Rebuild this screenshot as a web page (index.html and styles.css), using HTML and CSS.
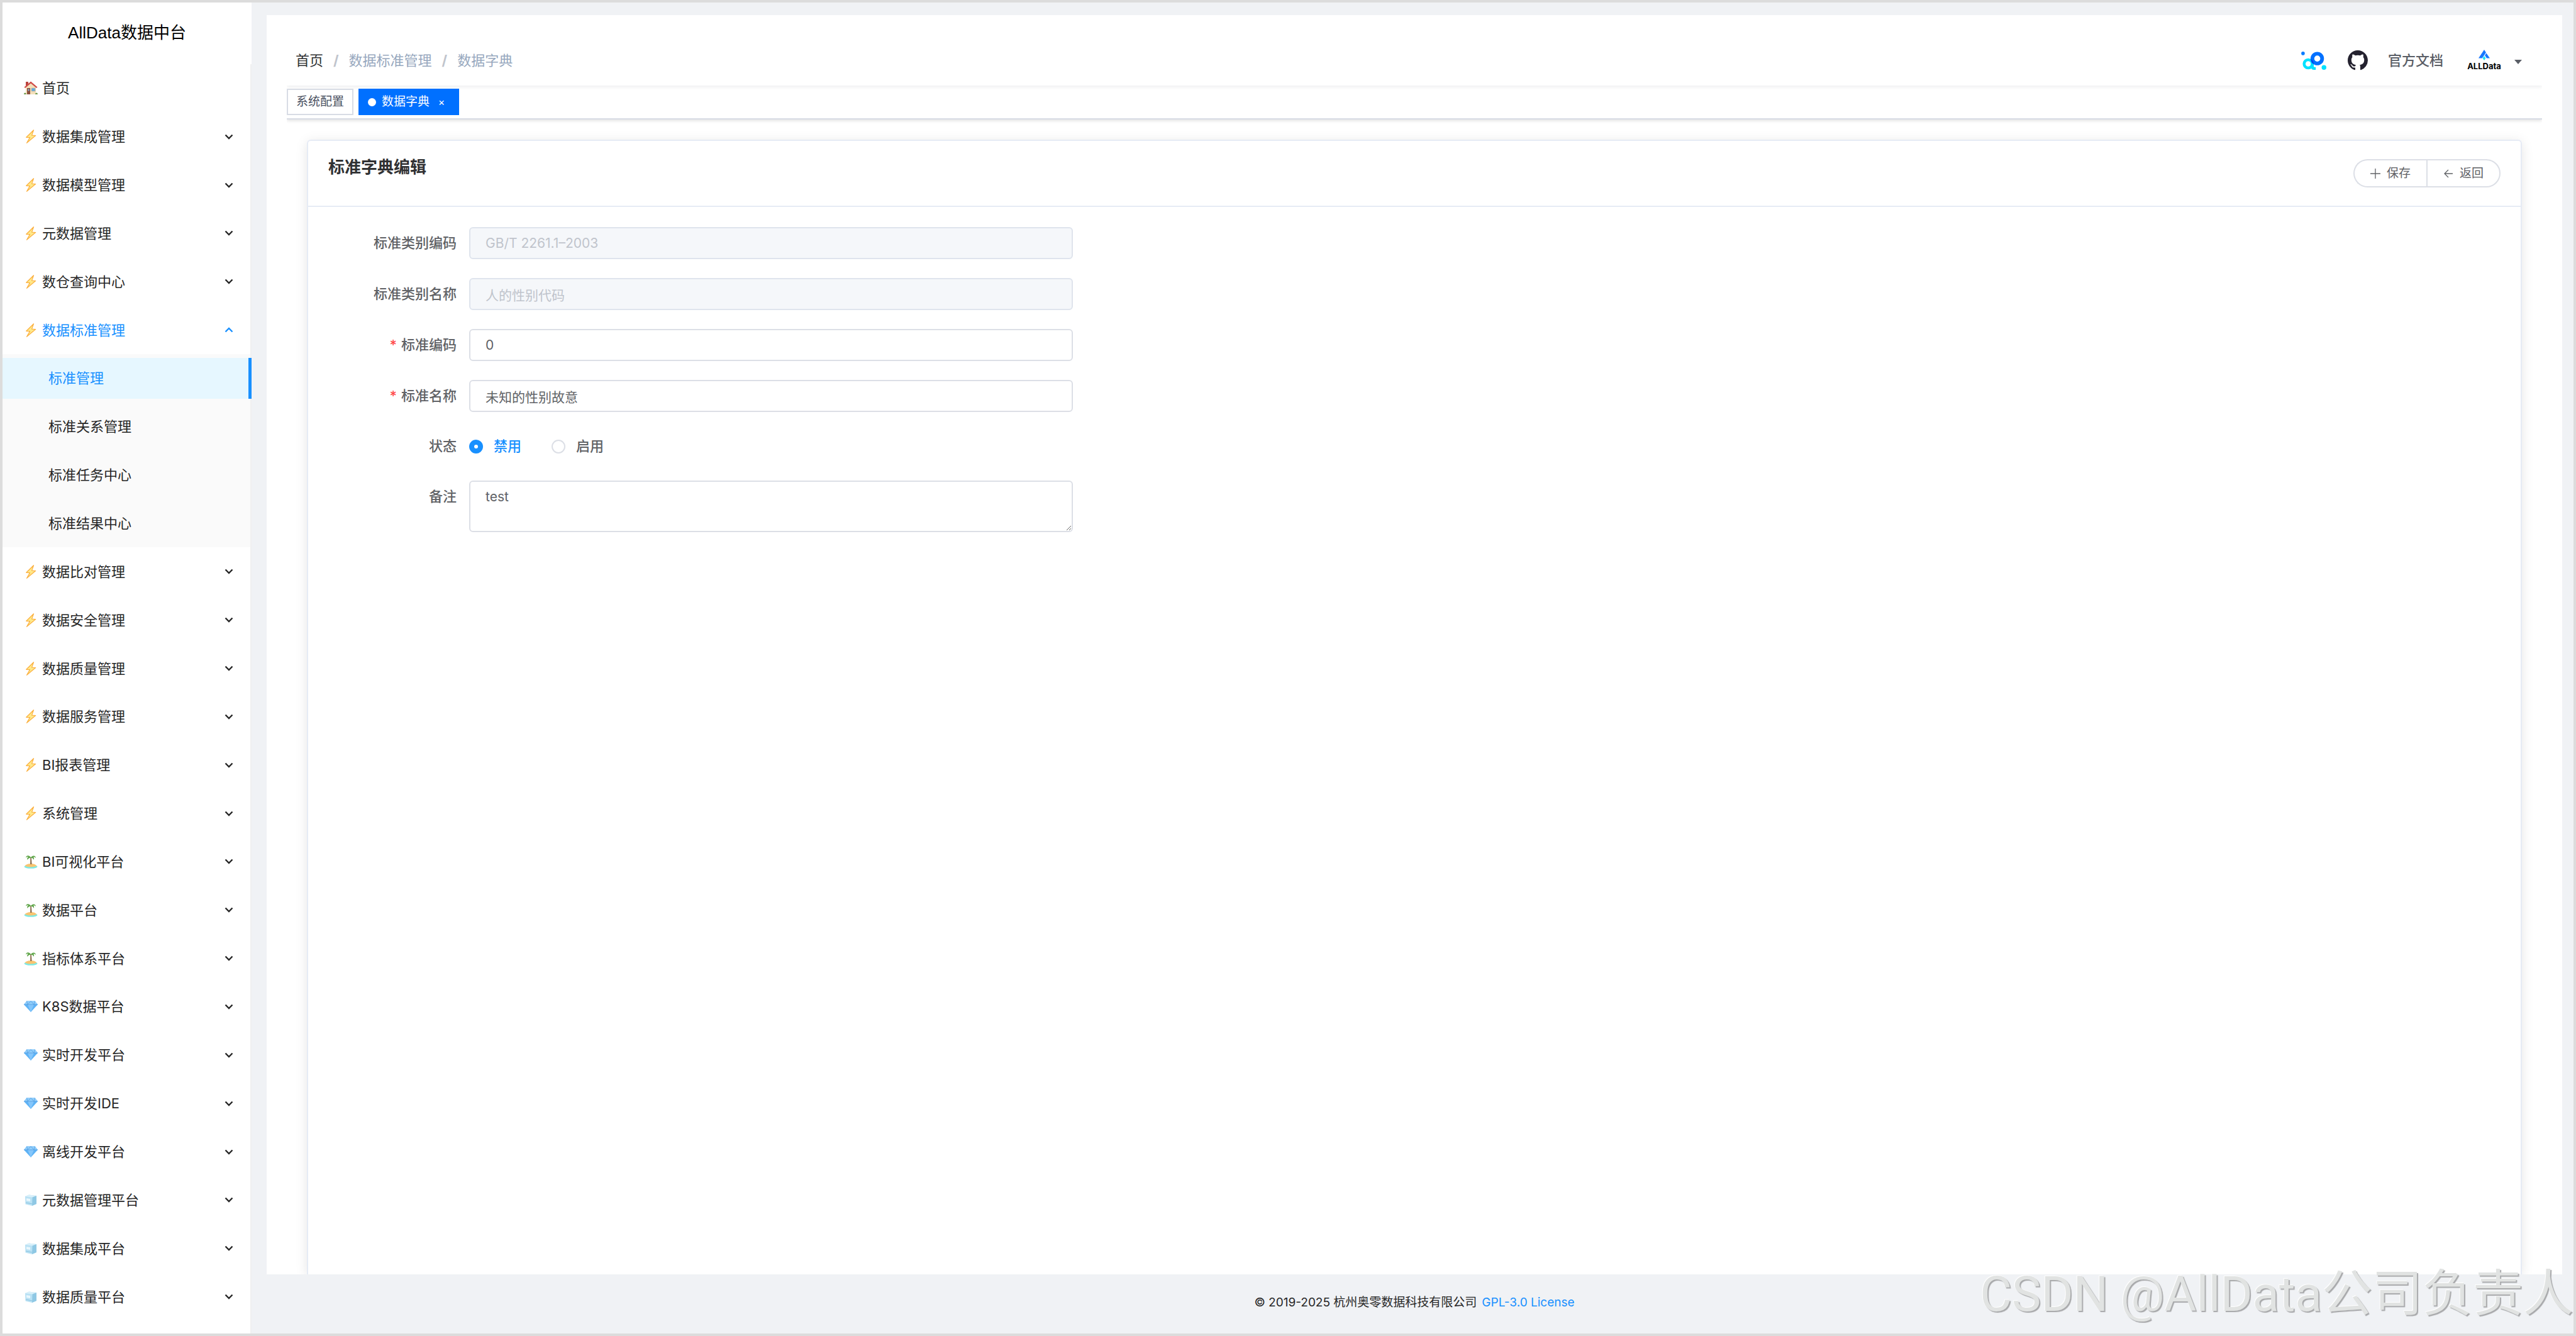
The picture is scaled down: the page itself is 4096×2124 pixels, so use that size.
FILE: index.html
```html
<!DOCTYPE html>
<html lang="zh-CN">
<head>
  <meta charset="UTF-8">
  <title>AllData数据中台</title>
  <link rel="stylesheet" href="styles.css">
</head>
<body>

<!-- shared icons -->
<svg class="sprite" width="0" height="0" aria-hidden="true">
  <symbol id="i-home" viewBox="0 0 22 22">
    <path d="M3 1h4v6H3z" fill="#b8453f"/>
    <path d="M11 2l8 7v12H3V9z" fill="#f3dfba"/>
    <path d="M11 .5L21.500 9.500 20 11 11 3.500 2 11 .5 9.500z" fill="#cf4a47"/>
    <path d="M5 11h5v10H5z" fill="#8b4f3c"/>
    <path d="M6.500 12.500h2v3h-2z" fill="#7db7e0"/>
    <path d="M12 11h6v5h-6z" fill="#5fa8e0" stroke="#c9b79a" stroke-width=".8"/>
    <path d="M0 21c0-3 3-3.500 4 0zM18 21c.5-3.500 4-3 4 0z" fill="#6f9a4c"/>
  </symbol>
  <symbol id="i-bolt" viewBox="0 0 22 22">
    <path d="M15.500.8L3.800 12.300l5.700.3L4.500 21.300 18.600 9.500l-6-.4z" fill="#ffe98a" stroke="#fbb040" stroke-width="1.200" stroke-linejoin="round"/>
  </symbol>
  <symbol id="i-island" viewBox="0 0 22 22">
    <ellipse cx="11" cy="18.800" rx="10.500" ry="3" fill="#7fe9e4"/>
    <path d="M1.500 17.500c3-4.500 15-5 19 0-4 2.500-15 2.500-19 0z" fill="#f8c471"/>
    <path d="M10.300 4h1.500l.8 11h-2.500z" fill="#8a6a4a"/>
    <path d="M11 4C8 0 4 .5 3 4.500c2-1.500 3-1.500 4-1C5 4.500 5 6.500 5.500 8 7 5.500 9 5 11 4.800c2 .2 4 .9 4.500 3.200 1-2 .5-3.700-.5-4.500 1.500-.4 3 .2 4 1.500C18.500.8 14 0 11 4z" fill="#5fa548"/>
  </symbol>
  <symbol id="i-gem" viewBox="0 0 22 22">
    <path d="M4.500 2.500h13L22 8 11 20 0 8z" fill="#5eb3f6"/>
    <path d="M4.500 2.500h13L22 8H0z" fill="#8fcdfb"/>
    <path d="M6 8h10l-5 12z" fill="#84c6fb"/>
    <path d="M0 8h22M4.500 2.500L6 8l5-5.500L16 8l1.500-5.500" fill="none" stroke="#4a97dd" stroke-width=".7"/>
  </symbol>
  <symbol id="i-ice" viewBox="0 0 22 22">
    <path d="M2 5l6-2.500L20 4v13l-7 3-10.500-2.500z" fill="#b9e1f4"/>
    <path d="M2 5l6-2.500L20 4l-6.500 2.500z" fill="#d9f0fa"/>
    <path d="M13.500 6.500L20 4v13l-7 3z" fill="#8fc8e4"/>
    <path d="M4 8l6 1v4l-6-1z" fill="#e9f7fd"/>
    <path d="M3 15l10 2" stroke="#8ac3e0"/>
  </symbol>
  <symbol id="i-down" viewBox="0 0 14 9">
    <path d="M1.500 1.500L7 7l5.500-5.500" fill="none" stroke="currentColor" stroke-width="2.400"/>
  </symbol>
  <symbol id="i-up" viewBox="0 0 14 9">
    <path d="M1.500 7.500L7 2l5.500 5.500" fill="none" stroke="currentColor" stroke-width="2.400"/>
  </symbol>
</svg>

<aside class="sidebar">
  <h1 class="logo-title">AllData数据中台</h1>
  <nav class="menu-wrap">
    <ul class="menu">
      <li><a class="menu-item" href="#"><svg class="ico"><use href="#i-home"/></svg>首页</a></li>
      <li><button class="menu-item"><svg class="ico"><use href="#i-bolt"/></svg>数据集成管理<svg class="arrow"><use href="#i-down"/></svg></button></li>
      <li><button class="menu-item"><svg class="ico"><use href="#i-bolt"/></svg>数据模型管理<svg class="arrow"><use href="#i-down"/></svg></button></li>
      <li><button class="menu-item"><svg class="ico"><use href="#i-bolt"/></svg>元数据管理<svg class="arrow"><use href="#i-down"/></svg></button></li>
      <li><button class="menu-item"><svg class="ico"><use href="#i-bolt"/></svg>数仓查询中心<svg class="arrow"><use href="#i-down"/></svg></button></li>
      <li><button class="menu-item open"><svg class="ico"><use href="#i-bolt"/></svg>数据标准管理<svg class="arrow"><use href="#i-up"/></svg></button></li>
      <li class="has-sub">
        <ul class="submenu">
          <li><a class="sub-item active" href="#">标准管理</a></li>
          <li><a class="sub-item" href="#">标准关系管理</a></li>
          <li><a class="sub-item" href="#">标准任务中心</a></li>
          <li><a class="sub-item" href="#">标准结果中心</a></li>
        </ul>
      </li>
      <li><button class="menu-item"><svg class="ico"><use href="#i-bolt"/></svg>数据比对管理<svg class="arrow"><use href="#i-down"/></svg></button></li>
      <li><button class="menu-item"><svg class="ico"><use href="#i-bolt"/></svg>数据安全管理<svg class="arrow"><use href="#i-down"/></svg></button></li>
      <li><button class="menu-item"><svg class="ico"><use href="#i-bolt"/></svg>数据质量管理<svg class="arrow"><use href="#i-down"/></svg></button></li>
      <li><button class="menu-item"><svg class="ico"><use href="#i-bolt"/></svg>数据服务管理<svg class="arrow"><use href="#i-down"/></svg></button></li>
      <li><button class="menu-item"><svg class="ico"><use href="#i-bolt"/></svg>BI报表管理<svg class="arrow"><use href="#i-down"/></svg></button></li>
      <li><button class="menu-item"><svg class="ico"><use href="#i-bolt"/></svg>系统管理<svg class="arrow"><use href="#i-down"/></svg></button></li>
      <li><button class="menu-item"><svg class="ico"><use href="#i-island"/></svg>BI可视化平台<svg class="arrow"><use href="#i-down"/></svg></button></li>
      <li><button class="menu-item"><svg class="ico"><use href="#i-island"/></svg>数据平台<svg class="arrow"><use href="#i-down"/></svg></button></li>
      <li><button class="menu-item"><svg class="ico"><use href="#i-island"/></svg>指标体系平台<svg class="arrow"><use href="#i-down"/></svg></button></li>
      <li><button class="menu-item"><svg class="ico"><use href="#i-gem"/></svg>K8S数据平台<svg class="arrow"><use href="#i-down"/></svg></button></li>
      <li><button class="menu-item"><svg class="ico"><use href="#i-gem"/></svg>实时开发平台<svg class="arrow"><use href="#i-down"/></svg></button></li>
      <li><button class="menu-item"><svg class="ico"><use href="#i-gem"/></svg>实时开发IDE<svg class="arrow"><use href="#i-down"/></svg></button></li>
      <li><button class="menu-item"><svg class="ico"><use href="#i-gem"/></svg>离线开发平台<svg class="arrow"><use href="#i-down"/></svg></button></li>
      <li><button class="menu-item"><svg class="ico"><use href="#i-ice"/></svg>元数据管理平台<svg class="arrow"><use href="#i-down"/></svg></button></li>
      <li><button class="menu-item"><svg class="ico"><use href="#i-ice"/></svg>数据集成平台<svg class="arrow"><use href="#i-down"/></svg></button></li>
      <li><button class="menu-item"><svg class="ico"><use href="#i-ice"/></svg>数据质量平台<svg class="arrow"><use href="#i-down"/></svg></button></li>
    </ul>
  </nav>
</aside>

<div class="container">
  <main class="panel">
    <header class="navbar">
      <nav class="breadcrumb">
        <a href="#">首页</a><span class="sep">/</span><span>数据标准管理</span><span class="sep">/</span><span>数据字典</span>
      </nav>
      <div class="nav-right">
        <a class="brand" href="#" aria-label="AllData">
          <svg width="40" height="31" viewBox="60 65 150 115">
            <circle cx="71" cy="79" r="10.500" fill="#0a7bff"/>
            <circle cx="102" cy="141" r="24.500" fill="none" stroke="#00e1ff" stroke-width="17"/>
            <path d="M118 120h17v36q0 5 5 5h7v16h-10q-19 0-19-18z" fill="#00e1ff"/>
            <circle cx="156" cy="110" r="29" fill="none" stroke="#0070ff" stroke-width="22"/>
            <path d="M117 112a33 33 0 0 1 17 32a40 40 0 0 1-17-32z" fill="#0048f0"/>
            <circle cx="196" cy="163" r="14" fill="#00e1ff"/>
          </svg>
        </a>
        <a class="github" href="#" aria-label="GitHub">
          <svg width="32" height="32" viewBox="0 0 16 16"><path fill="#24222f" d="M8 0C3.580 0 0 3.580 0 8c0 3.540 2.290 6.530 5.470 7.590.4.070.55-.17.55-.38 0-.19-.01-.82-.01-1.490-2.010.37-2.530-.49-2.690-.94-.09-.23-.48-.94-.82-1.130-.28-.15-.68-.52-.01-.53.63-.01 1.080.58 1.230.82.72 1.210 1.870.87 2.330.66.070-.52.28-.87.51-1.070-1.780-.2-3.640-.89-3.640-3.950 0-.87.31-1.590.82-2.150-.08-.2-.36-1.020.08-2.120 0 0 .67-.21 2.200.82.64-.18 1.320-.27 2-.27s1.360.09 2 .27c1.530-1.040 2.200-.82 2.200-.82.44 1.100.16 1.920.08 2.120.51.56.82 1.270.82 2.150 0 3.070-1.870 3.750-3.650 3.950.29.25.54.73.54 1.480 0 1.070-.01 1.930-.01 2.200 0 .21.15.46.55.38A8.010 8.010 0 0 0 16 8c0-4.420-3.580-8-8-8z"/></svg>
        </a>
        <a class="docs" href="#">官方文档</a>
        <button class="avatar">
          <span class="avatar-logo">
            <svg width="18" height="17" viewBox="1119 63 68 64">
              <path d="M1153 63l11 17-23 34h-22z" fill="#1677ff"/>
              <path d="M1166 84l21 30h-19l-11-17z" fill="#1677ff"/>
              <path d="M1153 101l9 13-9 13-9-13z" fill="#1fe5f5"/>
            </svg>
            <span class="avatar-name">ALLData</span>
          </span>
          <svg class="caret" width="12" height="7" viewBox="0 0 12 7"><path d="M0 0h12L6 7z" fill="#5a5e66"/></svg>
        </button>
      </div>
    </header>

    <div class="tags">
      <a class="tag" href="#">系统配置</a>
      <a class="tag active" href="#"><span class="dot"></span>数据字典<span class="close">×</span></a>
    </div>

    <section class="card">
      <div class="card-header">
        <h2>标准字典编辑</h2>
        <div class="btn-group">
          <button type="submit" form="dictForm"><svg width="16" height="16" viewBox="0 0 16 16"><path d="M8 0v16M0 8h16" stroke="currentColor" stroke-width="1.300"/></svg>保存</button>
          <button type="button"><svg width="16" height="16" viewBox="0 0 16 16"><path d="M15 8H2M8 2L2 8l6 6" fill="none" stroke="currentColor" stroke-width="1.300"/></svg>返回</button>
        </div>
      </div>
      <form id="dictForm" class="form">
        <div class="row">
          <label for="gbTypeCode">标准类别编码</label>
          <input type="text" id="gbTypeCode" value="GB/T 2261.1–2003" disabled>
        </div>
        <div class="row">
          <label for="gbTypeName">标准类别名称</label>
          <input type="text" id="gbTypeName" value="人的性别代码" disabled>
        </div>
        <div class="row">
          <label for="gbCode" class="required">标准编码</label>
          <input type="text" id="gbCode" value="0">
        </div>
        <div class="row">
          <label for="gbName" class="required">标准名称</label>
          <input type="text" id="gbName" value="未知的性别故意">
        </div>
        <div class="row radios" role="radiogroup" aria-labelledby="statusLabel">
          <span class="label" id="statusLabel">状态</span>
          <label class="radio"><input type="radio" name="status" value="0" checked><span>禁用</span></label>
          <label class="radio"><input type="radio" name="status" value="1"><span>启用</span></label>
        </div>
        <div class="row">
          <label for="remark">备注</label>
          <textarea id="remark">test</textarea>
        </div>
      </form>
    </section>
  </main>

  <footer class="footer">© 2019-2025 杭州奥零数据科技有限公司 <a href="#">GPL-3.0 License</a></footer>
</div>

<div class="watermark"><span class="latin">CSDN @AllData</span>公司负责人</div>

</body>
</html>
```

FILE: styles.css
```css
* {
  box-sizing: border-box;
}

body {
  margin: 0;
  min-height: 100vh;
  display: flex;
  border: 4px solid #dcdcdc;
  background-color: #f0f2f5;
  font-family: Inter, "Noto Sans CJK SC", sans-serif;
  font-size: 22px;
  line-height: 32px;
  color: #262626;
}

a {
  color: inherit;
  text-decoration: none;
}

button {
  font: inherit;
  color: inherit;
  background: none;
  border: none;
  padding: 0;
  cursor: pointer;
}

ul {
  list-style: none;
  margin: 0;
  padding: 0;
}

.sprite {
  position: absolute;
}

/* sidebar */
.sidebar {
  flex: 0 0 396px;
  display: flex;
  flex-direction: column;
  background-color: #fff;
}

.logo-title {
  height: 98px;
  margin: 0;
  padding-top: 32px;
  font-family: "Liberation Sans", "Noto Sans CJK SC", sans-serif;
  font-size: 26px;
  line-height: 32px;
  font-weight: 400;
  text-align: center;
  color: #000;
}

.menu-wrap {
  flex: 1;
  display: flex;
  flex-direction: column;
  padding-bottom: 20px;
  border-right: 2px solid #f0f0f0;
}

.menu,
.submenu {
  flex: 1;
  display: flex;
  flex-direction: column;
}

.menu > li,
.submenu > li {
  flex: 1 0 64px;
  display: flex;
}

.menu > .has-sub {
  flex: 4 0 256px;
}

.menu-item {
  flex: 1;
  display: flex;
  align-items: center;
  padding: 0 27px 0 34px;
  text-align: left;
}

.menu-item.open {
  color: #1890ff;
}

.ico {
  width: 22px;
  height: 22px;
  margin-right: 7px;
}

.arrow {
  width: 14px;
  height: 9px;
  margin-left: auto;
}

.submenu {
  background-color: #fafafa;
}

.sub-item {
  flex: 1;
  display: flex;
  align-items: center;
  position: relative;
  margin: 6px 0;
  padding-left: 73px;
}

.sub-item.active {
  background-color: #e6f7ff;
  color: #1890ff;
}

.sub-item.active::after {
  content: "";
  position: absolute;
  top: 0;
  right: -2px;
  bottom: 0;
  width: 5px;
  background-color: #1890ff;
}

/* right side */
.container {
  flex: 1;
  display: flex;
  flex-direction: column;
  padding: 20px 18px 0 24px;
}

.panel {
  flex: 1;
  display: flex;
  flex-direction: column;
  padding: 32px 32px 0;
  background-color: #fff;
  overflow: hidden;
}

.navbar {
  height: 80px;
  display: flex;
  justify-content: space-between;
  align-items: center;
  padding: 0 32px 0 14px;
  box-shadow: 0 2px 6px rgba(0, 21, 41, 0.08);
  clip-path: inset(0 0 -10px 0);
}

.breadcrumb {
  display: flex;
  color: #97a8be;
}

.breadcrumb a {
  color: #303133;
}

.breadcrumb .sep {
  margin: 0 16px;
  font-weight: 700;
  color: #c0c4cc;
}

.nav-right {
  display: flex;
  align-items: center;
  color: #5a5e66;
}

.nav-right svg {
  display: block;
}

.github {
  margin: 0 32px 0 34px;
}

.docs {
  font-weight: 500;
}

.avatar {
  display: flex;
  align-items: center;
  gap: 21px;
  margin-left: 38px;
}

.avatar-logo {
  display: flex;
  flex-direction: column;
  align-items: center;
  width: 54px;
}

.avatar-name {
  font-size: 13px;
  line-height: 18px;
  font-weight: 700;
  color: #000;
}

.caret {
  margin-top: 4px;
}

.tags {
  height: 54px;
  display: flex;
  align-items: center;
  gap: 8px;
  border-bottom: 2px solid #d8dce5;
  box-shadow: 0 2px 5px rgba(0, 0, 0, 0.12);
  clip-path: inset(0 0 -12px 0);
}

.tag {
  height: 42px;
  display: flex;
  align-items: center;
  padding: 0 13px;
  border: 2px solid #d8dce5;
  font-size: 19px;
  color: #495060;
}

.tag.active {
  background-color: #0070ff;
  border-color: #0070ff;
  color: #fff;
}

.dot {
  width: 13px;
  height: 13px;
  margin-right: 9px;
  border-radius: 50%;
  background-color: #fff;
}

.close {
  width: 26px;
  margin-left: 6px;
  font-size: 16px;
  text-align: center;
}

/* card */
.card {
  flex: 1;
  margin: 32px 32px 0;
  border: 2px solid #e6ebf5;
  border-bottom: none;
  border-radius: 6px 6px 0 0;
  box-shadow: 0 3px 19px rgba(0, 0, 0, 0.1);
}

.card-header {
  display: flex;
  justify-content: space-between;
  padding: 29px 32px;
  border-bottom: 2px solid #e6ebf5;
}

.card-header h2 {
  margin: 0;
  font-size: 26px;
  line-height: 26px;
  font-weight: 700;
  color: #303133;
}

.btn-group {
  display: flex;
}

.btn-group button {
  height: 45px;
  display: flex;
  align-items: center;
  gap: 10px;
  padding: 0 25px;
  border: 2px solid #dcdfe6;
  border-radius: 0 23px 23px 0;
  font-size: 19px;
  color: #606266;
}

.btn-group button:first-child {
  border-right: none;
  border-radius: 23px 0 0 23px;
}

.form {
  padding: 32px;
  color: #606266;
}

.row {
  display: flex;
  align-items: flex-start;
  margin-bottom: 30px;
}

.row > label,
.row > .label {
  flex: 0 0 224px;
  padding-right: 20px;
  line-height: 51px;
  font-weight: 500;
  text-align: right;
}

.required::before {
  content: "*";
  margin-right: 7px;
  color: #ff4949;
}

.row input[type="text"],
.row textarea {
  width: 960px;
  height: 51px;
  margin: 0;
  padding: 0 24px;
  border: 2px solid #dcdfe6;
  border-radius: 6px;
  background-color: #fff;
  font-family: inherit;
  font-size: 21px;
  line-height: 32px;
  color: #606266;
}

.row input[type="text"]:disabled {
  background-color: #f5f7fa;
  border-color: #dfe4ed;
  color: #c0c4cc;
}

.row textarea {
  height: 82px;
  padding: 8px 24px;
  resize: vertical;
}

.row.radios {
  height: 49px;
  align-items: center;
}

.row .radio {
  flex: none;
  display: flex;
  align-items: center;
  gap: 17px;
  margin-right: 48px;
  padding: 0;
}

.radio input {
  appearance: none;
  width: 22px;
  height: 22px;
  margin: 0;
  border: 2px solid #dcdfe6;
  border-radius: 50%;
}

.radio input:checked {
  border: 8px solid #1890ff;
  background-color: #fff;
}

.radio input:checked + span {
  color: #1890ff;
}

.footer {
  height: 94px;
  padding-bottom: 4px;
  display: flex;
  justify-content: center;
  align-items: center;
  gap: 8px;
  font-size: 19px;
}

.footer a {
  color: #1890ff;
}

.watermark {
  position: fixed;
  right: 4px;
  bottom: 8px;
  font-size: 80px;
  line-height: 116px;
  color: #e1e3e2;
  text-shadow: 2px 2px 1px #a8a9ab, -1px -1px 1px #fff;
  pointer-events: none;
}

.watermark .latin {
  font-family: Roboto, sans-serif;
  font-size: 78px;
}
```
